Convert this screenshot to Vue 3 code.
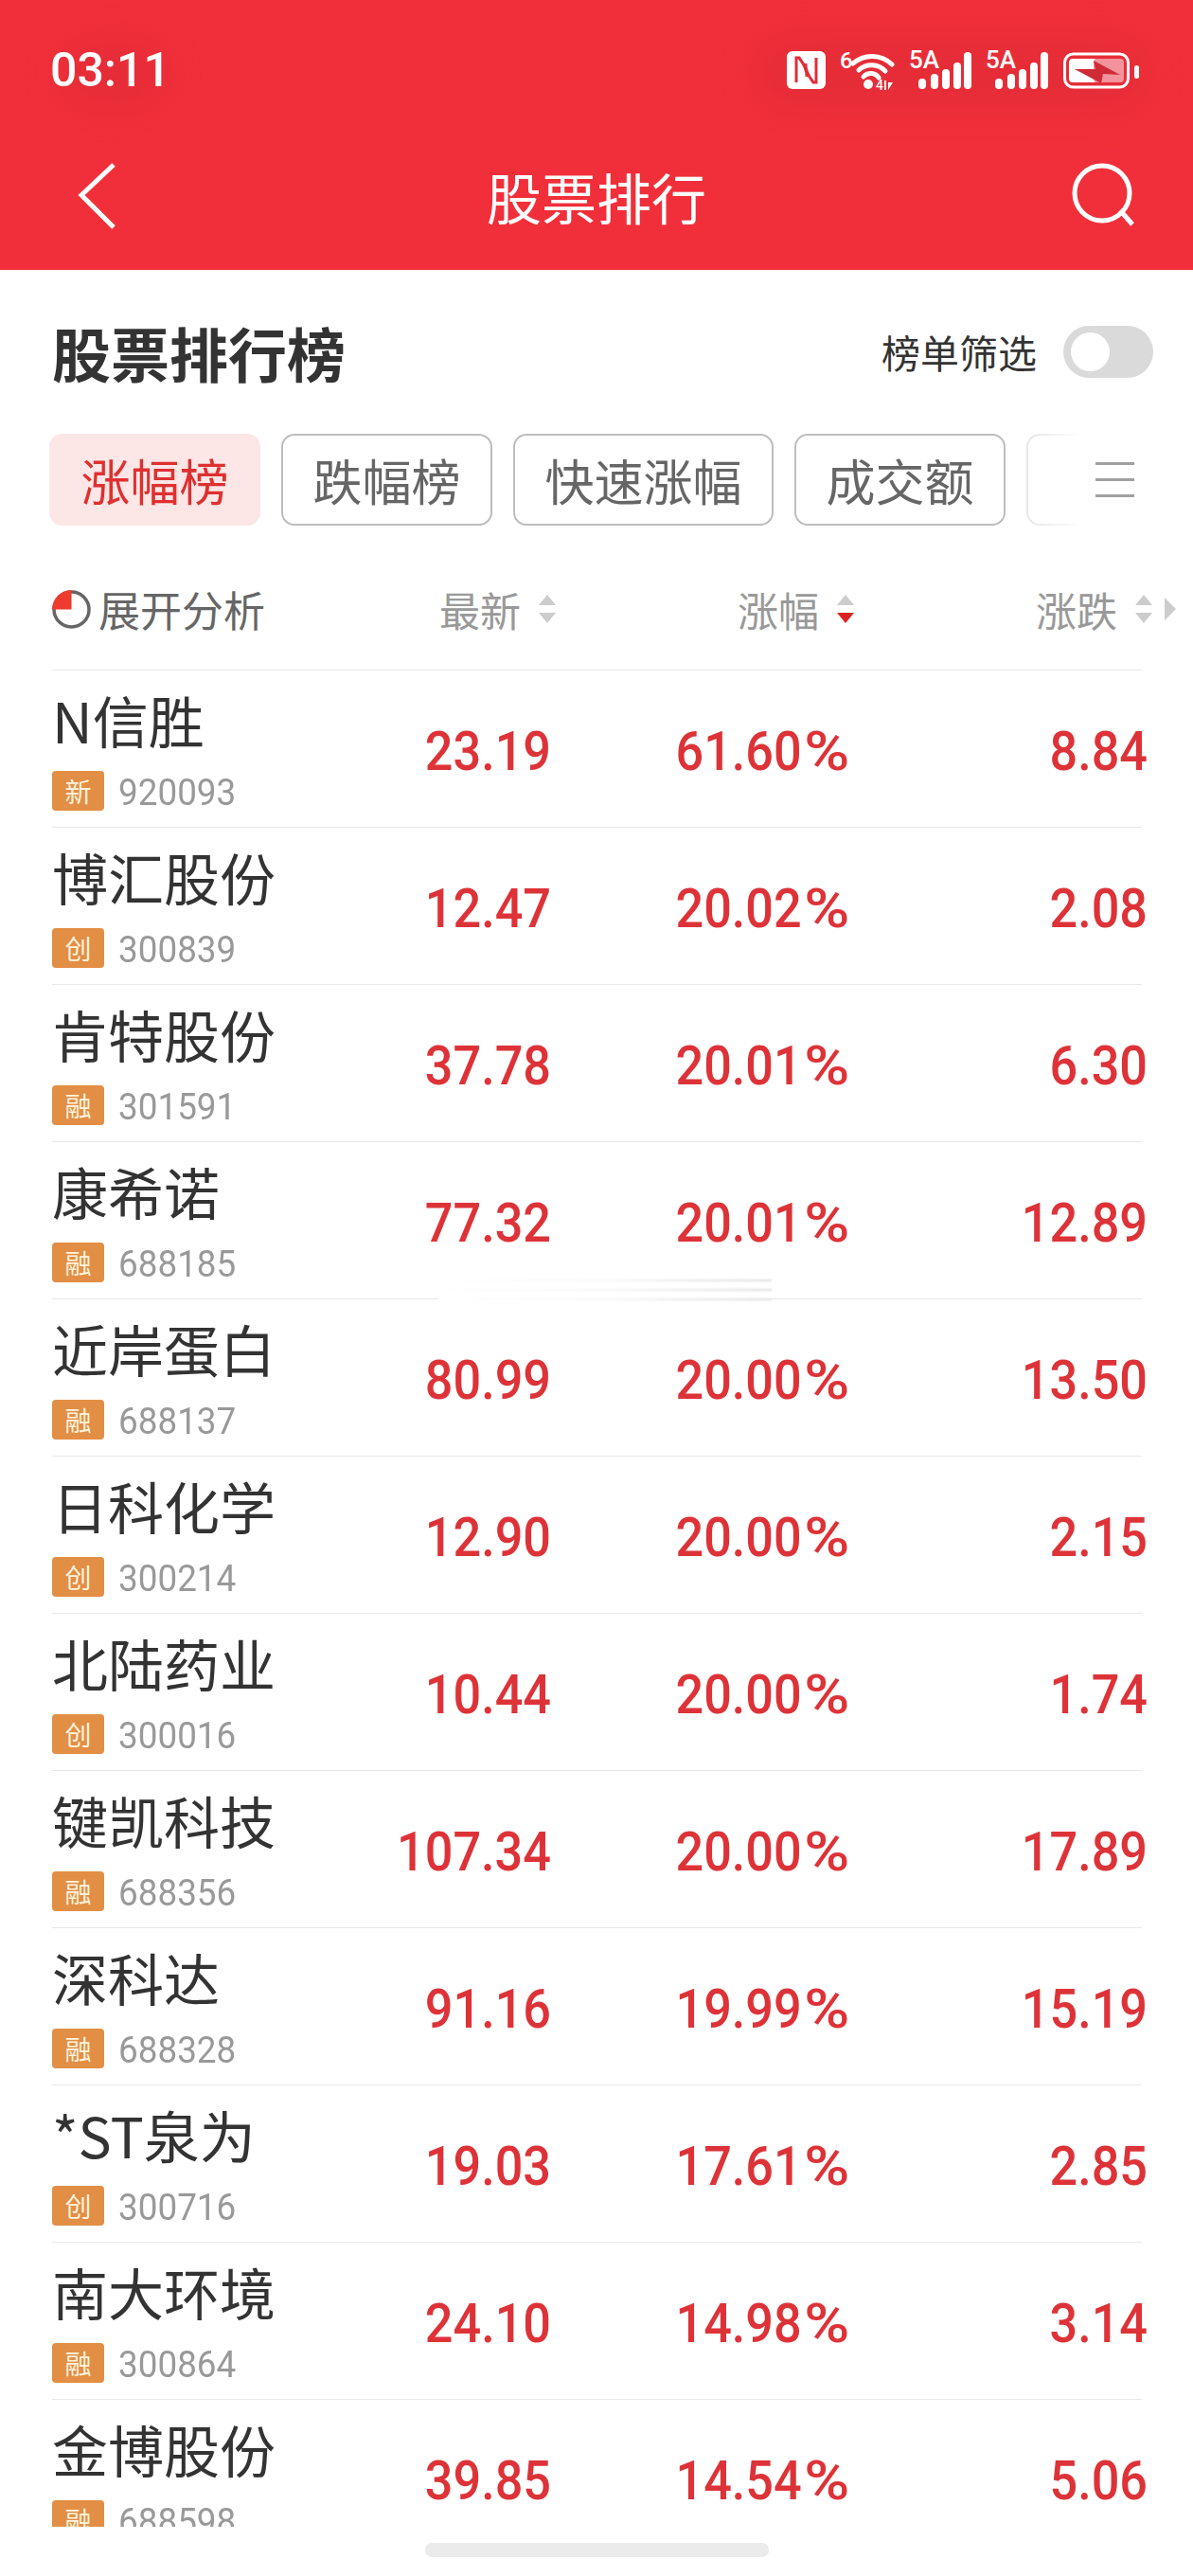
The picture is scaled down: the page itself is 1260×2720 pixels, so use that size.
<script setup>
const rows = [
  { name: 'N信胜', tag: '新', code: '920093', price: '23.19', pct: '61.60', chg: '8.84' },
  { name: '博汇股份', tag: '创', code: '300839', price: '12.47', pct: '20.02', chg: '2.08' },
  { name: '肯特股份', tag: '融', code: '301591', price: '37.78', pct: '20.01', chg: '6.30' },
  { name: '康希诺', tag: '融', code: '688185', price: '77.32', pct: '20.01', chg: '12.89' },
  { name: '近岸蛋白', tag: '融', code: '688137', price: '80.99', pct: '20.00', chg: '13.50' },
  { name: '日科化学', tag: '创', code: '300214', price: '12.90', pct: '20.00', chg: '2.15' },
  { name: '北陆药业', tag: '创', code: '300016', price: '10.44', pct: '20.00', chg: '1.74' },
  { name: '键凯科技', tag: '融', code: '688356', price: '107.34', pct: '20.00', chg: '17.89' },
  { name: '深科达', tag: '融', code: '688328', price: '91.16', pct: '19.99', chg: '15.19' },
  { name: '*ST泉为', tag: '创', code: '300716', price: '19.03', pct: '17.61', chg: '2.85' },
  { name: '南大环境', tag: '融', code: '300864', price: '24.10', pct: '14.98', chg: '3.14' },
  { name: '金博股份', tag: '融', code: '688598', price: '39.85', pct: '14.54', chg: '5.06' },
]
const tabs = ['跌幅榜', '快速涨幅', '成交额']
const signals = [0, 1]
</script>

<template>
  <div class="page">
    <header class="top">
      <div class="halo halo-time"></div>
      <div class="halo halo-icons"></div>
      <div class="status">
        <span class="time">03:11</span>
        <div class="status-icons">
          <svg width="41" height="40" viewBox="0 0 41 40">
            <rect width="41" height="40" rx="6" fill="#fff" />
            <path d="M10 33 V7 H13 Q22 19 21 27" fill="none" stroke="#e22d38" stroke-width="3" />
            <path d="M31 7 V33 H28 Q19 21 20 13" fill="none" stroke="#e22d38" stroke-width="3" />
          </svg>
          <svg width="58" height="71" viewBox="0 -15 58 71">
            <text x="0" y="18" class="sig-text">6</text>
            <path d="M14 13 A30 30 0 0 1 55 14" fill="none" stroke="#fff" stroke-width="5" stroke-linecap="round" />
            <path d="M20 20 A20 20 0 0 1 48 21" fill="none" stroke="#fff" stroke-width="5" stroke-linecap="round" />
            <path d="M25 27 A10 10 0 0 1 41 28" fill="none" stroke="#fff" stroke-width="5" stroke-linecap="round" />
            <circle cx="30" cy="35" r="5" fill="#fff" />
            <text x="38" y="41" class="sig-tiny">4</text>
            <path d="M47 31 H49 V41 H47 Z M51 33 L56 33 L51 41 Z" fill="#fff" />
          </svg>
          <svg v-for="s in signals" :key="s" width="66" height="71" viewBox="0 -15 66 71">
            <text x="0" y="18" class="sig-text small">5A</text>
            <rect x="10" y="29" width="8" height="11" rx="4" fill="#fff" />
            <rect x="23" y="24" width="8" height="16" rx="4" fill="#fff" />
            <rect x="35" y="19" width="8" height="21" rx="4" fill="#fff" />
            <rect x="47" y="12" width="8" height="28" rx="4" fill="#fff" />
            <rect x="58" y="1" width="8" height="39" rx="4" fill="#fff" />
          </svg>
          <svg width="81" height="41" viewBox="0 0 81 41">
            <rect x="2.5" y="3" width="67" height="35" rx="9" fill="none" stroke="#fff" stroke-width="3" />
            <rect x="7" y="8" width="30" height="25" rx="4" fill="#fff" />
            <rect x="33" y="8" width="32" height="25" rx="4" fill="#f3939b" />
            <path d="M33 10 L61 25 L43 24 L41 34 L13 19 L35 19 Z" fill="#cf2a36" />
            <rect x="76" y="15" width="5" height="14" rx="2.5" fill="#fff" />
          </svg>
        </div>
      </div>
      <div class="nav">
        <svg class="nav-icon back" width="44" height="72" viewBox="0 0 44 72">
          <path d="M38 3 L4 35 L38 69" fill="none" stroke="#fff" stroke-width="5" />
        </svg>
        <h1 class="nav-title">股票排行</h1>
        <svg class="nav-icon right" width="70" height="70" viewBox="0 0 70 70">
          <circle cx="33" cy="32" r="29" fill="none" stroke="#fff" stroke-width="5" />
          <path d="M52 50 L65 65" fill="none" stroke="#fff" stroke-width="5" />
        </svg>
      </div>
    </header>

    <main class="body">
      <div class="heading">
        <h2 class="heading-title">股票排行榜</h2>
        <div class="filter">
          <span class="filter-label">榜单筛选</span>
          <span class="toggle"><span class="knob"></span></span>
        </div>
      </div>

      <div class="tabs">
        <span class="tab active">涨幅榜</span>
        <span v-for="t in tabs" :key="t" class="tab" :class="{ wide: t.length === 4 }">{{ t }}</span>
        <span class="tab-more">
          <span class="tab-stub"></span>
          <span class="burger"><i></i><i></i><i></i></span>
        </span>
      </div>

      <div class="thead">
        <div class="analysis">
          <svg width="41" height="41" viewBox="0 0 41 41">
            <circle cx="20.5" cy="20.5" r="18.5" fill="none" stroke="#666" stroke-width="3.5" />
            <path d="M20.5 0 A20.5 20.5 0 0 0 0 20.5 L20.5 20.5 Z" fill="#ee3b2f" />
          </svg>
          <span>展开分析</span>
        </div>
        <div class="th">
          <span>最新</span>
          <span class="sort"><i class="up"></i><i class="down"></i></span>
        </div>
        <div class="th">
          <span>涨幅</span>
          <span class="sort"><i class="up"></i><i class="down on"></i></span>
        </div>
        <div class="th">
          <span>涨跌</span>
          <span class="sort"><i class="up"></i><i class="down"></i></span>
          <i class="more-col"></i>
        </div>
      </div>
      <div class="divider"></div>

      <div class="list">
        <template v-for="r in rows" :key="r.code">
          <div class="row">
            <div class="stock">
              <div class="name">{{ r.name }}</div>
              <div class="meta">
                <span class="tag">{{ r.tag }}</span>
                <span class="code">{{ r.code }}</span>
              </div>
            </div>
            <div class="val"><span>{{ r.price }}</span></div>
            <div class="val"><span>{{ r.pct }}<b class="sign">%</b></span></div>
            <div class="val"><span>{{ r.chg }}</span></div>
          </div>
          <div class="divider"></div>
        </template>
        <div class="smear"></div>
      </div>
    </main>

    <div class="home-wrap"><div class="home"></div></div>
  </div>
</template>

<style scoped>
.page {
  position: relative;
  width: 1260px;
  height: 2720px;
  overflow: hidden;
  background: #fff;
  font-family: "Noto Sans CJK SC", "Noto Sans", sans-serif;
}
.top {
  position: relative;
  height: 285px;
  background: #f12f3a;
  color: #fff;
}
.halo {
  position: absolute;
  background: #d92b35;
  border-radius: 30px;
  filter: blur(24px);
  opacity: 0.6;
}
.halo-time { left: 65px; top: 48px; width: 110px; height: 60px; }
.halo-icons { left: 800px; top: 45px; width: 410px; height: 65px; }
.status {
  position: relative;
  display: flex;
  align-items: center;
  justify-content: space-between;
  height: 148px;
  padding: 0 57px 0 53px;
  box-sizing: border-box;
}
.status-icons {
  display: flex;
  align-items: center;
  gap: 15px;
}
.status-icons svg { display: block; }
.time {
  font: 500 50px/1 Roboto, sans-serif;
  color: #fff;
}
.sig-text {
  font: 500 24px Roboto, sans-serif;
  fill: #fff;
}
.sig-text.small { font-size: 26px; }
.sig-tiny {
  font: 500 14px Roboto, sans-serif;
  fill: #fff;
}
.nav {
  position: relative;
  display: grid;
  grid-template-columns: 1fr auto 1fr;
  align-items: center;
  padding: 0 59px;
  margin-top: 22px;
  height: 74px;
}
.nav-title {
  margin: 0;
  font-size: 58px;
  font-weight: 400;
  line-height: 74px;
  color: #fff;
}
.nav-icon { display: block; }
.nav-icon.back { margin-left: 23px; }
.nav-icon.right { justify-self: end; }

.body { padding: 0 46px 0 55px; }
.heading {
  display: flex;
  align-items: center;
  justify-content: space-between;
  height: 173px;
  box-sizing: border-box;
}
.heading-title {
  margin: 0;
  font-size: 62px;
  font-weight: 700;
  line-height: 1;
  color: #333;
}
.filter {
  display: flex;
  align-items: center;
  gap: 28px;
  margin-right: -4px;
}
.filter-label {
  font-size: 41px;
  line-height: 1;
  color: #333;
}
.toggle {
  display: block;
  width: 95px;
  height: 55px;
  border-radius: 28px;
  background: #dadada;
  padding: 7px 8px;
  box-sizing: border-box;
}
.knob {
  display: block;
  width: 41px;
  height: 41px;
  border-radius: 50%;
  background: #fff;
}
.tabs {
  display: flex;
  gap: 22px;
  height: 97px;
  margin-left: -3px;
}
.tab {
  display: flex;
  align-items: center;
  justify-content: center;
  flex: none;
  width: 223px;
  height: 97px;
  box-sizing: border-box;
  border: 2px solid #bdbdbd;
  border-radius: 14px;
  font-size: 52px;
  line-height: 1;
  color: #666;
}
.tab.wide { width: 275px; }
.tab.active {
  border-color: #fce6e6;
  background: #fce6e6;
  color: #df3030;
}
.tab-more {
  position: relative;
  flex: 1;
  display: flex;
  align-items: center;
  justify-content: flex-end;
}
.tab-stub {
  position: absolute;
  left: 0;
  top: 0;
  width: 60px;
  height: 97px;
  box-sizing: border-box;
  border: 2px solid #e6e6e6;
  border-right: 0;
  border-radius: 14px 0 0 14px;
  -webkit-mask-image: linear-gradient(to right, #000, transparent);
  mask-image: linear-gradient(to right, #000, transparent);
}
.burger {
  display: flex;
  flex-direction: column;
  gap: 14px;
  width: 41px;
  margin-right: 16px;
}
.burger i {
  display: block;
  height: 3px;
  background: #a0a0a0;
}
.thead {
  display: grid;
  grid-template-columns: 250px 283px 315px 315px;
  align-items: center;
  height: 152px;
  padding-top: 24px;
  box-sizing: border-box;
}
.analysis {
  display: flex;
  align-items: center;
  gap: 8px;
  font-size: 44px;
  line-height: 1;
  color: #666;
  white-space: nowrap;
}
.analysis svg { display: block; flex: none; }
.th {
  position: relative;
  display: flex;
  align-items: center;
  justify-content: flex-end;
  gap: 19px;
  font-size: 43px;
  line-height: 1;
  color: #999;
}
.sort {
  display: flex;
  flex-direction: column;
  gap: 8px;
  width: 19px;
}
.sort i {
  display: block;
  width: 0;
  height: 0;
  border-left: 9.5px solid transparent;
  border-right: 9.5px solid transparent;
}
.sort .up { border-bottom: 11px solid #ccc; }
.sort .down { border-top: 11px solid #ccc; }
.sort .down.on { border-top-color: #dd2222; }
.more-col {
  position: absolute;
  right: -24px;
  top: 50%;
  margin-top: -12px;
  width: 0;
  height: 0;
  border-top: 12px solid transparent;
  border-bottom: 12px solid transparent;
  border-left: 12px solid #ccc;
}
.divider {
  height: 1px;
  margin-right: 8px;
  background: #e8e8e8;
}
.list {
  position: relative;
  height: 1960px;
  overflow: hidden;
}
.row {
  display: grid;
  grid-template-columns: 290px 237px 316px 314px;
  height: 165px;
}
.stock { padding-top: 18px; }
.name {
  font-size: 59px;
  line-height: 68px;
  color: #333;
  white-space: nowrap;
}
.meta {
  display: flex;
  align-items: center;
  gap: 15px;
  margin-top: 20px;
}
.tag {
  display: flex;
  align-items: center;
  justify-content: center;
  flex: none;
  width: 55px;
  height: 42px;
  border-radius: 4px;
  background: #e28e45;
  color: #fff3dc;
  font-size: 28px;
  line-height: 1;
}
.code {
  display: inline-block;
  padding-top: 3px;
  font: 400 38px/1 Roboto, sans-serif;
  color: #999;
  transform: scaleX(0.97);
  transform-origin: left center;
}
.val {
  display: flex;
  align-items: center;
  justify-content: flex-end;
  padding-top: 4px;
  font: 500 58px/1 Roboto, sans-serif;
  color: #dd3338;
}
.val span {
  display: inline-block;
  transform: scaleX(0.9);
  transform-origin: right center;
}
.sign {
  display: inline-block;
  margin: 0 11px 0 3px;
  font-weight: 500;
  transform: scaleX(1.25);
  transform-origin: left center;
}
.smear {
  position: absolute;
  left: 408px;
  top: 639px;
  width: 352px;
  height: 30px;
  filter: blur(0.8px);
  background:
    linear-gradient(to right, #fff, rgba(255,255,255,0.75) 50%, rgba(255,255,255,0)),
    repeating-linear-gradient(to bottom, #fff 0 4px, #dcdcdc 4px 6px, #fff 6px 10px);
}
.home-wrap {
  display: flex;
  justify-content: center;
  padding-top: 17px;
}
.home {
  width: 363px;
  height: 15px;
  border-radius: 7px;
  background: #ebebeb;
}
</style>

<style>
html, body { margin: 0; background: #fff; }
</style>
